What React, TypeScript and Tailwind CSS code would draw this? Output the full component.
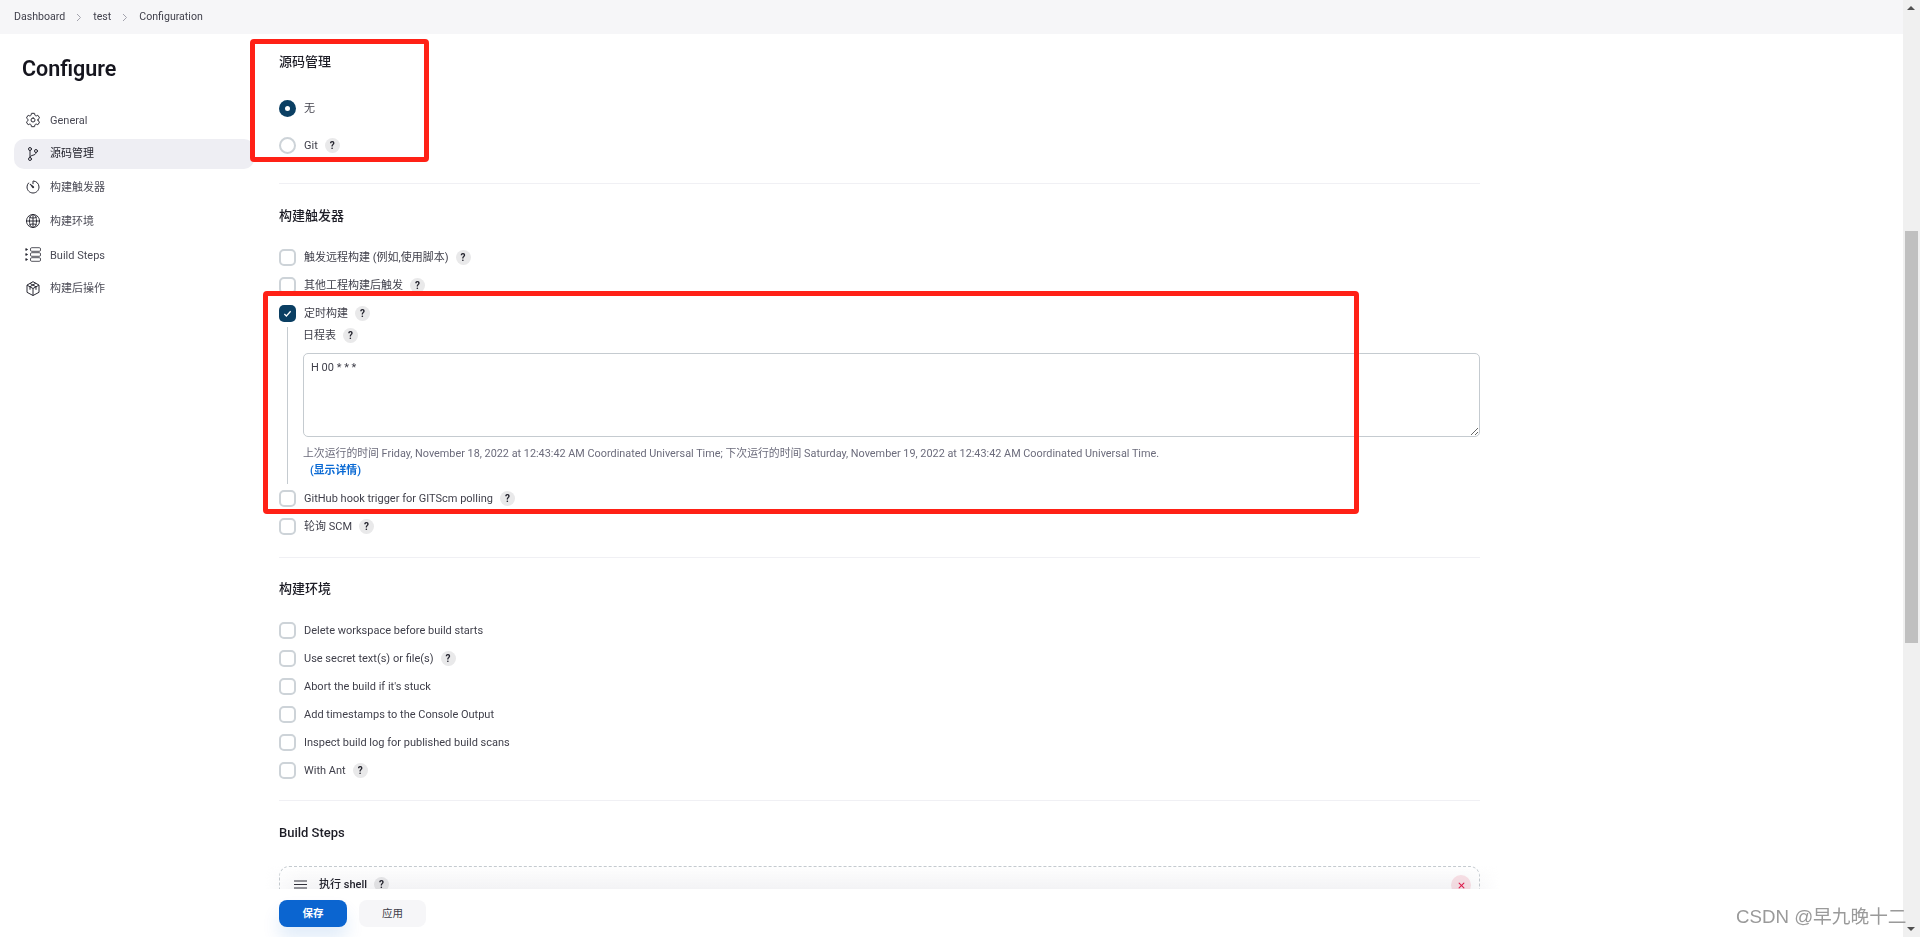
import type { ReactNode } from 'react';
import {
  IoSettingsOutline,
  IoGitBranchOutline,
  IoTimerOutline,
  IoGlobeOutline,
  IoClose,
} from 'react-icons/io5';

const font = "font-['Roboto','Noto_Sans_CJK_SC',sans-serif]";

function StepsIcon() {
  return (
    <svg width="17" height="17" viewBox="0 0 16 16" fill="none" stroke="currentColor" strokeWidth="0.8">
      <rect x="5.5" y="1.2" width="10" height="3.6" rx="1.2" />
      <rect x="5.5" y="6.2" width="10" height="3.6" rx="1.2" />
      <rect x="5.5" y="11.2" width="10" height="3.6" rx="1.2" />
      <path d="M0.8 2.1l1.8 0.9-1.8 0.9zM0.8 7.1l1.8 0.9-1.8 0.9zM0.8 12.1l1.8 0.9-1.8 0.9z" fill="currentColor" />
    </svg>
  );
}

function PackageIcon() {
  return (
    <svg width="17" height="17" viewBox="0 0 16 16" fill="none" stroke="currentColor" strokeWidth="1" strokeLinejoin="round">
      <path d="M8 15L2 11.8V4.6L8 1.2l6 3.4v7.2z" />
      <path d="M2 4.6L8 8l6-3.4M8 8v7" />
      <path d="M5 2.9l6 3.4v3M10.8 2.7L5 6.2v3" />
    </svg>
  );
}

const nav = [
  { label: 'General', icon: <IoSettingsOutline size={18} /> },
  { label: '源码管理', icon: <IoGitBranchOutline size={18} />, active: true },
  { label: '构建触发器', icon: <IoTimerOutline size={18} /> },
  { label: '构建环境', icon: <IoGlobeOutline size={18} /> },
  { label: 'Build Steps', icon: <StepsIcon /> },
  { label: '构建后操作', icon: <PackageIcon /> },
];

function Help() {
  return (
    <span className="ml-[7px] flex h-[15px] w-[15px] items-center justify-center rounded-full bg-[#e9e9ea] text-[10px] font-bold text-[#24242e]">
      ?
    </span>
  );
}

function Checkbox({ checked }: { checked?: boolean }) {
  if (checked) {
    return (
      <span className="flex h-[17px] w-[17px] shrink-0 items-center justify-center rounded-[5px] bg-[#0b3f63]">
        <svg width="9" height="9" viewBox="0 0 10 10" fill="none" stroke="white" strokeWidth="1.4">
          <path d="M1.5 5.5l2.3 2.3 4.7-5.3" />
        </svg>
      </span>
    );
  }
  return <span className="h-[17px] w-[17px] shrink-0 rounded-[5px] border-2 border-[#cdd3d8] bg-white" />;
}

function CheckRow({ label, help, checked }: { label: string; help?: boolean; checked?: boolean }) {
  return (
    <div className="flex h-[28px] items-center">
      <Checkbox checked={checked} />
      <span className="ml-2 pt-[2px] text-[#3f3f4a]">{label}</span>
      {help && <Help />}
    </div>
  );
}

function Heading({ children }: { children: ReactNode }) {
  return <div className="flex h-[20px] items-center text-[13px] font-medium text-[#1d1d26]">{children}</div>;
}

function Divider({ className }: { className: string }) {
  return <div className={`h-px w-full bg-[#f0f0f4] ${className}`} />;
}

export default function App() {
  return (
    <div className={`relative flex h-[937px] w-[1920px] overflow-hidden bg-white text-[11px] ${font}`}>
      <div className="flex min-w-0 flex-1 flex-col">
        <div className="flex h-[34px] shrink-0 items-center bg-[#f6f6f8] pl-[14px] text-[10.6px] text-[#3f3f4a]">
          <span>Dashboard</span>
          <svg className="mx-[11px]" width="6" height="9" viewBox="0 0 6 9" fill="none" stroke="#9a9aa4" strokeWidth="0.9">
            <path d="M1 1l3.5 3.5L1 8" />
          </svg>
          <span>test</span>
          <svg className="mx-[11px]" width="6" height="9" viewBox="0 0 6 9" fill="none" stroke="#9a9aa4" strokeWidth="0.9">
            <path d="M1 1l3.5 3.5L1 8" />
          </svg>
          <span>Configuration</span>
        </div>

        <div className="flex min-h-0 flex-1">
          <aside className="w-[279px] shrink-0 pl-[14px]">
            <div className="mt-[21px] flex h-[28px] items-center pl-2 text-[21.5px] font-semibold text-[#15151e]">Configure</div>
            <nav className="mt-[22px] flex w-[240px] flex-col gap-[3.7px]">
              {nav.map((n) => (
                <div
                  key={n.label}
                  className={`flex h-[30px] items-center rounded-[10px] pl-[11px] text-[#4b4b56] ${n.active ? 'bg-[#eeeef3] text-[#24242e]' : ''}`}
                >
                  <span className="flex w-[16px] justify-center text-[#2a2a34]">{n.icon}</span>
                  <span className="ml-[9px] pt-[2px]">{n.label}</span>
                </div>
              ))}
            </nav>
          </aside>

          <main className="w-[1201px] shrink-0">
            <div className="mt-[18px]">
              <Heading>源码管理</Heading>
            </div>
            <div className="mt-[18px] flex h-[36px] items-center">
              <span className="flex h-[17px] w-[17px] items-center justify-center rounded-full bg-[#0b3f63]">
                <span className="h-[5px] w-[5px] rounded-full bg-white" />
              </span>
              <span className="ml-2 pt-[2px] text-[#3f3f4a]">无</span>
            </div>
            <div className="mt-px flex h-[36px] items-center">
              <span className="h-[17px] w-[17px] rounded-full border-2 border-[#cdd3d8]" />
              <span className="ml-2 pt-[2px] text-[#3f3f4a]">Git</span>
              <Help />
            </div>
            <Divider className="mt-[20px]" />

            <div className="mt-[22px]">
              <Heading>构建触发器</Heading>
            </div>
            <div className="mt-[17px]">
              <CheckRow label="触发远程构建 (例如,使用脚本)" help />
              <CheckRow label="其他工程构建后触发" help />
              <CheckRow label="定时构建" help checked />
              <div className="ml-2 border-l border-l-[#c5cbd0] pl-[15px]">
                <div className="flex h-[16px] items-center text-[#3f3f4a]">
                  <span className="pt-[2px]">日程表</span>
                  <Help />
                </div>
                <textarea
                  readOnly
                  defaultValue="H 00 * * *"
                  className="mt-[10px] block h-[84px] w-[1177px] resize-y rounded-[5px] border border-[#c5cbd0] px-[7px] py-[6px] text-[11px] text-[#3f3f4a] outline-none"
                />
                <div className="mt-[9px] h-[16px] text-[10.85px] leading-[16px] whitespace-nowrap text-[#6c6c7c]">
                  上次运行的时间 Friday, November 18, 2022 at 12:43:42 AM Coordinated Universal Time; 下次运行的时间 Saturday, November 19, 2022 at 12:43:42 AM Coordinated Universal Time.
                </div>
                <div className="h-[18px] pl-[7px] text-[10.85px] leading-[18px] font-semibold text-[#0b6ad4]">(显示详情)</div>
                <div className="h-[4px]" />
              </div>
              <CheckRow label="GitHub hook trigger for GITScm polling" help />
              <CheckRow label="轮询 SCM" help />
            </div>
            <Divider className="mt-[17px]" />

            <div className="mt-[21px]">
              <Heading>构建环境</Heading>
            </div>
            <div className="mt-[17px]">
              <CheckRow label="Delete workspace before build starts" />
              <CheckRow label="Use secret text(s) or file(s)" help />
              <CheckRow label="Abort the build if it's stuck" />
              <CheckRow label="Add timestamps to the Console Output" />
              <CheckRow label="Inspect build log for published build scans" />
              <CheckRow label="With Ant" help />
            </div>
            <Divider className="mt-[16px]" />

            <div className="mt-[22px]">
              <Heading>Build Steps</Heading>
            </div>
            <div className="mt-[23px] flex h-[60px] items-start rounded-t-[10px] border border-dashed border-[#c5cbd0] pt-[10px] pr-[8px] pl-[14px]">
              <svg width="13" height="16" viewBox="0 0 13 16" stroke="#30303a" strokeWidth="1.1" className="-mt-px">
                <path d="M0 5h13M0 8.5h13M0 12h13" />
              </svg>
              <span className="ml-[12px] font-medium text-[#24242e]">执行 shell</span>
              <Help />
              <span className="ml-auto -mt-[2px] flex h-[20px] w-[20px] items-center justify-center rounded-full bg-[#fbe3e8] text-[#e6194b]">
                <IoClose size={11} />
              </span>
            </div>
          </main>

          <div className="ml-auto flex w-[17px] shrink-0 flex-col bg-[#f0f0f0]" />
        </div>
      </div>

      {/* scrollbar sits at the window edge, over the top bar as well */}
      <div className="absolute top-0 right-0 h-[937px] w-[17px] bg-[#f0f0f0]">
        <div className="absolute top-[231px] left-[2px] h-[412px] w-[13px] bg-[#c0c0c0]" />
        <div className="absolute top-[6px] left-[4px] h-0 w-0 border-x-[4px] border-b-[4px] border-x-transparent border-b-[#505050]" />
        <div className="absolute bottom-[6px] left-[4px] h-0 w-0 border-x-[4px] border-t-[4px] border-x-transparent border-t-[#505050]" />
      </div>

      {/* sticky save bar */}
      <div className="absolute top-[865px] left-[265px] h-[24px] w-[1235px] bg-gradient-to-b from-transparent to-[#f3f3f5] mix-blend-multiply [mask-image:linear-gradient(to_right,transparent,black_3%,black_97%,transparent)]" />
      <div className="absolute top-[889px] left-0 flex h-[48px] w-[1903px] items-start bg-white pt-[11px] pl-[279px]">
        <button className="h-[27px] w-[68px] rounded-[8px] bg-[#0b65d0] text-[10.5px] font-bold text-white shadow-[0_12px_18px_rgba(11,101,208,0.12)]">保存</button>
        <button className="ml-[12px] h-[27px] w-[67px] rounded-[8px] bg-[#f6f6f8] text-[10.5px] text-[#3f3f4a]">应用</button>
      </div>

      {/* red annotations */}
      <div className="absolute top-[39px] left-[250px] h-[123px] w-[179px] rounded-[4px] border-[5px] border-[#ff2116]" />
      <div className="absolute top-[291px] left-[263px] h-[223px] w-[1096px] rounded-[4px] border-[5px] border-[#ff2116]" />

      <div className="absolute top-[905px] left-[1736px] text-[18.7px] leading-[24px] whitespace-nowrap text-[#9a9a9a] font-['Liberation_Sans','Noto_Sans_CJK_SC',sans-serif]">
        CSDN @早九晚十二
      </div>
    </div>
  );
}
